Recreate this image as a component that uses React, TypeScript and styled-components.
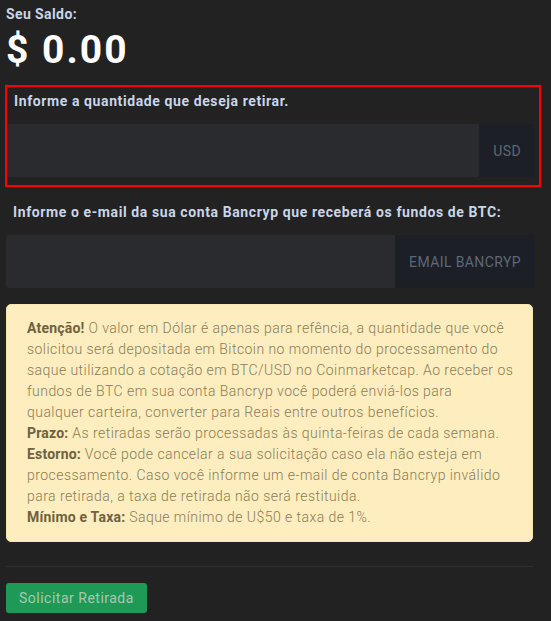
import React from "react";
import styled, { createGlobalStyle } from "styled-components";

const Global = createGlobalStyle`
  html, body { margin: 0; padding: 0; background: #222222; }
  body { font-family: Roboto, "Liberation Sans", sans-serif; }
  * { box-sizing: border-box; }
`;

const Page = styled.div`
  width: 551px;
  min-height: 621px;
  padding: 4px 16px 0 6px;
  background: #222222;
`;

const BalanceLabel = styled.div`
  font-size: 14px;
  font-weight: 700;
  line-height: 20px;
  letter-spacing: 0.4px;
  color: #c9d5e8;
`;

const Balance = styled.div`
  font-size: 39px;
  font-weight: 700;
  line-height: 44px;
  letter-spacing: 2px;
  color: #ffffff;
  margin-top: 4px;
`;

const FieldGroup = styled.div<{ $highlight?: boolean }>`
  display: flex;
  flex-direction: column;
  gap: 13px;
  ${(p) =>
    p.$highlight
      ? `
    margin: 13px -6px 0 -1px;
    border: 2px solid #ff0000;
    padding: 4px 4px 8px 0;
  `
      : `
    margin-top: 15px;
  `}
`;

const Label = styled.label`
  display: block;
  padding-left: 7px;
  font-size: 14px;
  font-weight: 700;
  line-height: 20px;
  letter-spacing: 0.6px;
  color: #c9d5e8;
`;

const InputGroup = styled.div`
  display: flex;
  height: 53px;
  border-radius: 3px;
  overflow: hidden;
`;

const Input = styled.input`
  flex: 1;
  min-width: 0;
  border: none;
  outline: none;
  background: #2a2b2e;
  color: #ddd;
  padding: 0 12px;
  font-family: inherit;
  font-size: 14px;
`;

const Addon = styled.span`
  display: flex;
  align-items: center;
  padding: 0 14px;
  background: #1c1f26;
  color: #5e6876;
  font-size: 14px;
  font-weight: 400;
  letter-spacing: 0.4px;
`;

const Alert = styled.div`
  margin-top: 16px;
  width: 527px;
  background: #fdedbf;
  border: 1px solid #fbe6ad;
  border-radius: 5px;
  padding: 13px 8px 13px 20px;
  color: #8a7d57;
  font-size: 14px;
  font-weight: 300;
  line-height: 21px;
  letter-spacing: 0.45px;
`;

const Strong = styled.strong`
  font-weight: 700;
  color: #6e6240;
  letter-spacing: 0.2px;
`;

const Divider = styled.hr`
  width: 527px;
  margin: 24px 0 16px;
  border: none;
  border-top: 1px solid #2e2e2e;
`;

const Button = styled.button`
  height: 30px;
  padding: 0 13px;
  border: none;
  border-radius: 3px;
  background: #1f9a56;
  color: #a7c8b3;
  font-family: inherit;
  font-size: 14px;
  font-weight: 400;
  letter-spacing: 0.5px;
  cursor: pointer;
`;

export default function App() {
  return (
    <>
      <Global />
      <Page>
        <BalanceLabel>Seu Saldo:</BalanceLabel>
        <Balance>$ 0.00</Balance>

        <FieldGroup $highlight>
          <Label>Informe a quantidade que deseja retirar.</Label>
          <InputGroup>
            <Input type="text" />
            <Addon>USD</Addon>
          </InputGroup>
        </FieldGroup>

        <FieldGroup>
          <Label>Informe o e-mail da sua conta Bancryp que receberá os fundos de BTC:</Label>
          <InputGroup>
            <Input type="text" />
            <Addon>EMAIL BANCRYP</Addon>
          </InputGroup>
        </FieldGroup>

        <Alert>
          <Strong>Atenção!</Strong> O valor em Dólar é apenas para refência, a quantidade que você
          solicitou será depositada em Bitcoin no momento do processamento do saque utilizando a
          cotação em BTC/USD no Coinmarketcap. Ao receber os fundos de BTC em sua conta Bancryp você
          poderá enviá-los para
          <br />
          qualquer carteira, converter para Reais entre outros benefícios.
          <br />
          <Strong>Prazo:</Strong> As retiradas serão processadas às quinta-feiras de cada semana.
          <br />
          <Strong>Estorno:</Strong> Você pode cancelar a sua solicitação caso ela não esteja em
          processamento. Caso você informe um e-mail de conta Bancryp inválido para retirada, a taxa
          de retirada não será restituida.
          <br />
          <Strong>Mínimo e Taxa:</Strong> Saque mínimo de U$50 e taxa de 1%.
        </Alert>

        <Divider />
        <Button>Solicitar Retirada</Button>
      </Page>
    </>
  );
}
